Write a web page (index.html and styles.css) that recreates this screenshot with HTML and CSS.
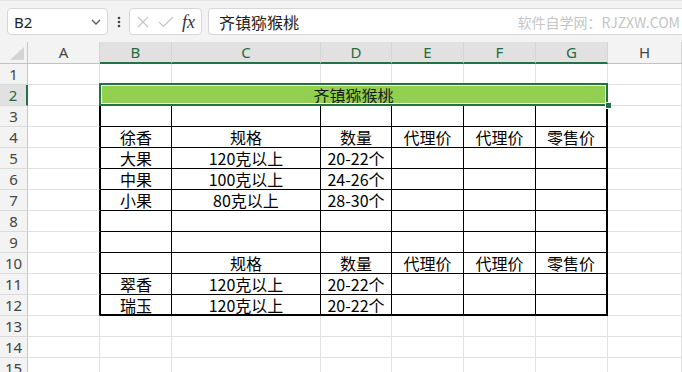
FILE: index.html
```html
<!DOCTYPE html>
<html lang="zh-CN">
<head>
    <meta charset="UTF-8">
    <meta name="viewport" content="width=device-width, initial-scale=1.0">
    <title>齐镇猕猴桃</title>
    <link rel="stylesheet" href="styles.css">
</head>
<body>

<div class="toolbar">
    <div class="namebox">
        <span>B2</span>
        <svg width="10" height="6" viewBox="0 0 10 6"><path d="M1 1 L5 5 L9 1" fill="none" stroke="#555" stroke-width="1.3"/></svg>
    </div>
    <div class="dots">
        <svg width="4" height="12" viewBox="0 0 4 12"><circle cx="2" cy="2" r="1.3"/><circle cx="2" cy="6" r="1.3"/><circle cx="2" cy="10" r="1.3"/></svg>
    </div>
    <div class="fxbox">
        <svg class="ico-x" width="12" height="12" viewBox="0 0 12 12"><path d="M1 1 L11 11 M11 1 L1 11" stroke="#c4c4c4" stroke-width="1.2"/></svg>
        <svg class="ico-ok" width="16" height="12" viewBox="0 0 16 12"><path d="M1 6 L5.5 10.5 L15 1" fill="none" stroke="#c4c4c4" stroke-width="1.2"/></svg>
        <span class="fx">fx</span>
    </div>
    <div class="formula">
        <span>齐镇猕猴桃</span>
        <span class="watermark">软件自学网：RJZXW.COM</span>
    </div>
</div>

<div class="sheet">
    <!-- column headers -->
    <div class="c corner"><svg width="14" height="13" viewBox="0 0 14 13"><polygon points="14,0 14,13 0,13" fill="#d4d4d4"/></svg></div>
    <div class="c hd">A</div>
    <div class="c hd sel">B</div>
    <div class="c hd sel">C</div>
    <div class="c hd sel">D</div>
    <div class="c hd sel">E</div>
    <div class="c hd sel">F</div>
    <div class="c hd sel">G</div>
    <div class="c hd">H</div>

    <!-- row 1 -->
    <div class="c rh">1</div>
    <div class="c"></div><div class="c"></div><div class="c"></div><div class="c"></div>
    <div class="c"></div><div class="c"></div><div class="c"></div><div class="c"></div>

    <!-- row 2 -->
    <div class="c rh on">2</div>
    <div class="c"></div>
    <div class="c title">齐镇猕猴桃</div>
    <div class="c"></div>

    <!-- row 3 -->
    <div class="c rh">3</div>
    <div class="c ta"></div>
    <div class="c t tl"></div><div class="c t"></div><div class="c t"></div><div class="c t"></div><div class="c t"></div><div class="c t tr"></div>
    <div class="c"></div>

    <!-- row 4 -->
    <div class="c rh">4</div>
    <div class="c ta"></div>
    <div class="c t tl">徐香</div><div class="c t">规格</div><div class="c t">数量</div><div class="c t">代理价</div><div class="c t">代理价</div><div class="c t tr">零售价</div>
    <div class="c"></div>

    <!-- row 5 -->
    <div class="c rh">5</div>
    <div class="c ta"></div>
    <div class="c t tl">大果</div><div class="c t">120克以上</div><div class="c t">20-22个</div><div class="c t"></div><div class="c t"></div><div class="c t tr"></div>
    <div class="c"></div>

    <!-- row 6 -->
    <div class="c rh">6</div>
    <div class="c ta"></div>
    <div class="c t tl">中果</div><div class="c t">100克以上</div><div class="c t">24-26个</div><div class="c t"></div><div class="c t"></div><div class="c t tr"></div>
    <div class="c"></div>

    <!-- row 7 -->
    <div class="c rh">7</div>
    <div class="c ta"></div>
    <div class="c t tl">小果</div><div class="c t">80克以上</div><div class="c t">28-30个</div><div class="c t"></div><div class="c t"></div><div class="c t tr"></div>
    <div class="c"></div>

    <!-- row 8 -->
    <div class="c rh">8</div>
    <div class="c ta"></div>
    <div class="c t tl"></div><div class="c t"></div><div class="c t"></div><div class="c t"></div><div class="c t"></div><div class="c t tr"></div>
    <div class="c"></div>

    <!-- row 9 -->
    <div class="c rh">9</div>
    <div class="c ta"></div>
    <div class="c t tl"></div><div class="c t"></div><div class="c t"></div><div class="c t"></div><div class="c t"></div><div class="c t tr"></div>
    <div class="c"></div>

    <!-- row 10 -->
    <div class="c rh">10</div>
    <div class="c ta"></div>
    <div class="c t tl"></div><div class="c t">规格</div><div class="c t">数量</div><div class="c t">代理价</div><div class="c t">代理价</div><div class="c t tr">零售价</div>
    <div class="c"></div>

    <!-- row 11 -->
    <div class="c rh">11</div>
    <div class="c ta"></div>
    <div class="c t tl">翠香</div><div class="c t">120克以上</div><div class="c t">20-22个</div><div class="c t"></div><div class="c t"></div><div class="c t tr"></div>
    <div class="c"></div>

    <!-- row 12 -->
    <div class="c rh">12</div>
    <div class="c ta"></div>
    <div class="c t tl tb">瑞玉</div><div class="c t tb">120克以上</div><div class="c t tb">20-22个</div><div class="c t tb"></div><div class="c t tb"></div><div class="c t tr tb"></div>
    <div class="c"></div>

    <!-- rows 13-15 -->
    <div class="c rh">13</div>
    <div class="c"></div><div class="c"></div><div class="c"></div><div class="c"></div>
    <div class="c"></div><div class="c"></div><div class="c"></div><div class="c"></div>
    <div class="c rh">14</div>
    <div class="c"></div><div class="c"></div><div class="c"></div><div class="c"></div>
    <div class="c"></div><div class="c"></div><div class="c"></div><div class="c"></div>
    <div class="c rh">15</div>
    <div class="c"></div><div class="c"></div><div class="c"></div><div class="c"></div>
    <div class="c"></div><div class="c"></div><div class="c"></div><div class="c"></div>

    <div class="selection"><span class="handle"></span></div>
</div>

</body>
</html>
```

FILE: styles.css
```css
body {
    margin: 0;
    width: 682px;
    height: 372px;
    overflow: hidden;
    background-color: #fff;
    font-family: "Noto Sans CJK SC", sans-serif;
    color: #000;
}
.toolbar {
    height: 42px;
    box-sizing: border-box;
    background-color: #f3f3f3;
    border-top: 1px solid #e4e4e4;
    display: flex;
    align-items: center;
    padding-left: 7px;
    overflow: hidden;
}
.namebox {
    width: 101px;
    height: 27px;
    box-sizing: border-box;
    flex: none;
    display: flex;
    align-items: center;
    justify-content: space-between;
    padding: 0 6px 0 6px;
    background-color: #fff;
    border: 1px solid #d6d6d6;
    border-radius: 4px;
    font-family: "Noto Sans", sans-serif;
    font-size: 15px;
    color: #222;
}
.dots {
    width: 21px;
    flex: none;
    display: flex;
    justify-content: center;
    fill: #444;
}
.dots svg {
    display: block;
}
.fxbox {
    width: 73px;
    height: 27px;
    box-sizing: border-box;
    flex: none;
    display: flex;
    align-items: center;
    background-color: #fff;
    border: 1px solid #d6d6d6;
    border-radius: 4px;
}
.ico-x {
    margin-left: 7px;
}
.ico-ok {
    margin-left: 9px;
}
.fx {
    margin-left: 8px;
    font-family: "Liberation Serif", serif;
    font-style: italic;
    font-size: 18px;
    color: #333;
    line-height: 1;
}
.formula {
    flex: none;
    width: 490px;
    height: 27px;
    box-sizing: border-box;
    margin-left: 6px;
    display: flex;
    align-items: center;
    justify-content: space-between;
    padding: 0 17px 0 10px;
    background-color: #fff;
    border: 1px solid #d6d6d6;
    border-radius: 4px;
    font-size: 16px;
    color: #222;
}
.watermark {
    font-size: 14px;
    color: #c4c4c4;
}
.sheet {
    position: relative;
    display: grid;
    grid-template-columns: 28px 72px 72px 149px 71px 72px 72px 72px 74px;
    grid-template-rows: 22px;
    grid-auto-rows: 21px;
}
.c {
    box-sizing: border-box;
    border-right: 1px solid #e1e1e1;
    border-bottom: 1px solid #e1e1e1;
    font-size: 16px;
    line-height: 20px;
    text-align: center;
    white-space: nowrap;
}
.corner {
    background-color: #f3f3f3;
    border-right-color: #c8c8c8;
    border-bottom-color: #c2c2c2;
    display: flex;
    align-items: flex-end;
    justify-content: flex-end;
    padding: 0 3px 3px 0;
}
.corner svg {
    display: block;
}
.hd {
    background-color: #f3f3f3;
    border-right-color: #d4d4d4;
    border-bottom-color: #c2c2c2;
    font-family: "Noto Sans", sans-serif;
    font-size: 15px;
    line-height: 21px;
    color: #444;
}
.hd.sel {
    background-color: #e1e1e1;
    color: #1e6b3e;
    border-bottom: 2px solid #217346;
    line-height: 20px;
}
.rh {
    background-color: #f3f3f3;
    border-right-color: #c8c8c8;
    border-bottom-color: #dadada;
    font-family: "Noto Sans", sans-serif;
    font-size: 15px;
    color: #444;
}
.rh.on {
    background-color: #e1e1e1;
    color: #1e6b3e;
    border-right: 2px solid #217346;
}
.title {
    grid-column: span 6;
    background-color: #92d050;
    border-bottom-color: #000;
    color: #1a1a1a;
}
.ta {
    border-right-color: #000;
}
.t {
    border-right-color: #000;
    border-bottom-color: #000;
}
.tl {
    border-left: 1px solid #000;
}
.tr {
    border-right: 2px solid #000;
}
.tb {
    border-bottom: 2px solid #000;
}
.selection {
    position: absolute;
    left: 99px;
    top: 41px;
    width: 509px;
    height: 23px;
    box-sizing: border-box;
    border: 2px solid #217346;
    box-shadow: inset 0 0 0 1px #fff;
}
.handle {
    position: absolute;
    left: 504px;
    top: 17px;
    width: 5px;
    height: 5px;
    background-color: #217346;
    border: 1px solid #fff;
}
```
